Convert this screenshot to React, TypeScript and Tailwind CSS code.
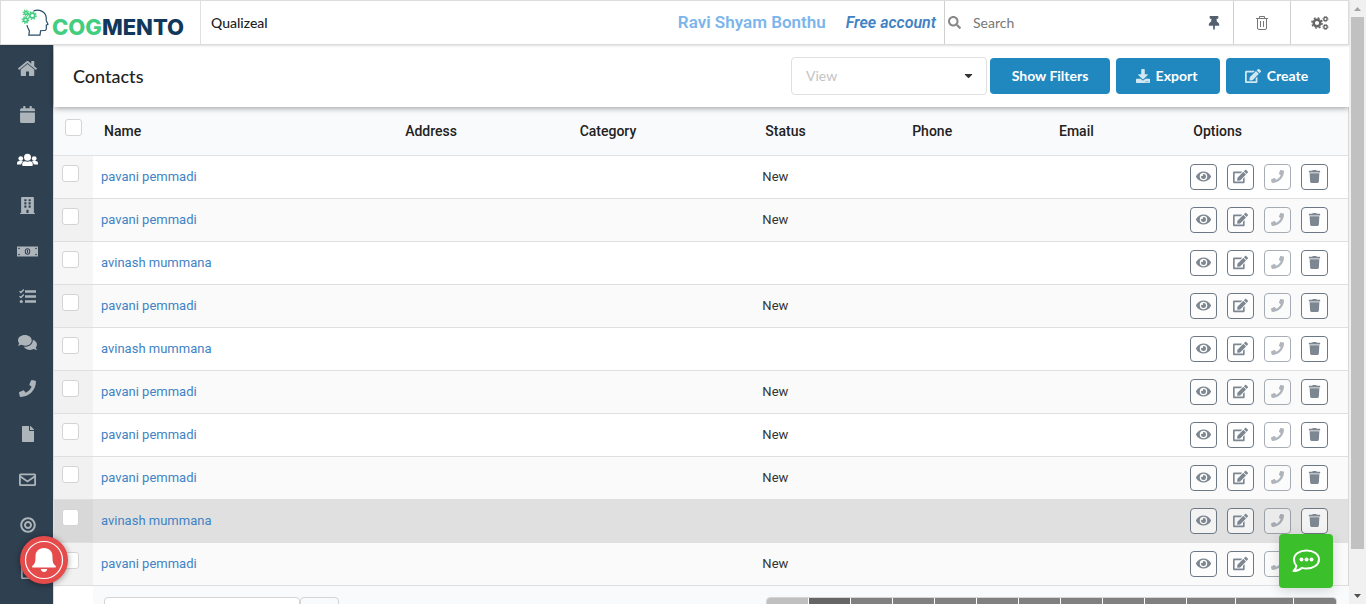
import React from 'react';
import {
  FaCalendar, FaBuilding, FaComments, FaPhone, FaFile,
  FaBullseye, FaRegFileAlt, FaThumbtack, FaEye, FaTrash, FaDownload, FaSearch, FaCaretDown,
} from 'react-icons/fa';

type IconProps = { size: number };

function HomeIcon({ size }: IconProps) {
  return (
    <svg viewBox="0 0 1792 1792" width={size} height={size} fill="currentColor" aria-hidden="true">
      <path d="M1472 992v480q0 26-19 45t-45 19h-384v-384h-256v384h-384q-26 0-45-19t-19-45v-480q0-1 .5-3t.5-3l575-474 575 474q1 2 1 6zm223-69l-62 74q-8 9-21 11h-3q-13 0-21-7l-692-577-692 577q-12 8-24 7-13-2-21-11l-62-74q-8-10-7-23.5t11-21.5l719-599q32-26 76-26t76 26l244 204v-195q0-14 9-23t23-9h192q14 0 23 9t9 23v408l219 182q10 8 11 21.5t-7 23.5z" />
    </svg>
  );
}

function UsersIcon({ size }: IconProps) {
  return (
    <svg viewBox="0 0 21 21" width={size} height={size} fill="currentColor" aria-hidden="true">
      <circle cx="3.800" cy="9.600" r="2.400" />
      <circle cx="17.200" cy="9.600" r="2.400" />
      <circle cx="10.500" cy="8.200" r="3.500" />
      <path d="M0 15.600v-1.300q0-2.400 2.200-2.400h2.900q.6 0 1 .3Q4.400 13.400 4.200 15.600zM21 15.600v-1.300q0-2.400-2.200-2.400h-2.900q-.6 0-1 .3 1.700 1.200 1.900 3.400z" />
      <path d="M5.200 16v-.4q0-3.300 3-3.300 2.300.9 4.600 0 3 0 3 3.300v.4q0 1-1 1H6.200q-1 0-1-1z" />
    </svg>
  );
}

function MoneyIcon({ size }: IconProps) {
  return (
    <svg viewBox="0 0 21 21" width={size} height={size} aria-hidden="true">
      <path fill="currentColor" d="M0 5.500h21v10H0z" />
      <g fill="#2f4050">
        <circle cx="2" cy="7.500" r=".8" /><circle cx="19" cy="7.500" r=".8" />
        <circle cx="2" cy="13.500" r=".8" /><circle cx="19" cy="13.500" r=".8" />
        <ellipse cx="10.500" cy="10.500" rx="2.700" ry="3.200" />
      </g>
      <ellipse cx="10.500" cy="10.500" rx="1.700" ry="2.300" fill="currentColor" />
      <path d="M10.500 9v3" stroke="#2f4050" />
    </svg>
  );
}

function TasksIcon({ size }: IconProps) {
  return (
    <svg viewBox="0 0 17 17" width={size} height={size} fill="none" stroke="currentColor" aria-hidden="true">
      <path d="M6 3.500h11M6 8.500h11M6 13.500h11" strokeWidth="2.400" />
      <path d="M.5 3.200 2 4.500 4.800 1.500M.5 8.200 2 9.500 4.800 6.500" strokeWidth="1.500" />
      <circle cx="2.300" cy="13.500" r="1.600" fill="currentColor" stroke="none" />
    </svg>
  );
}

function EnvelopeIcon({ size }: IconProps) {
  return (
    <svg viewBox="0 0 17 17" width={size} height={size} fill="none" stroke="currentColor" strokeWidth="1.800" aria-hidden="true">
      <rect x=".9" y="3.400" width="15.200" height="10.700" rx=".6" />
      <path d="M1 5.200 8.500 10.400 16 5.200" />
    </svg>
  );
}

const NAV: { label: string; icon: React.ComponentType<IconProps>; size: number; active?: boolean }[] = [
  { label: 'Home', icon: HomeIcon, size: 21 },
  { label: 'Calendar', icon: FaCalendar, size: 17 },
  { label: 'Contacts', icon: UsersIcon, size: 21, active: true },
  { label: 'Companies', icon: FaBuilding, size: 17 },
  { label: 'Deals', icon: MoneyIcon, size: 21 },
  { label: 'Tasks', icon: TasksIcon, size: 17 },
  { label: 'Cases', icon: FaComments, size: 19 },
  { label: 'Calls', icon: FaPhone, size: 17 },
  { label: 'Documents', icon: FaFile, size: 16 },
  { label: 'Email', icon: EnvelopeIcon, size: 17 },
  { label: 'Campaigns', icon: FaBullseye, size: 16 },
  { label: 'Forms', icon: FaRegFileAlt, size: 17 },
];

const P = 'pavani pemmadi';
const A = 'avinash mummana';
const ROWS = [
  { name: P, status: 'New' }, { name: P, status: 'New' }, { name: A, status: '' },
  { name: P, status: 'New' }, { name: A, status: '' }, { name: P, status: 'New' },
  { name: P, status: 'New' }, { name: P, status: 'New' }, { name: A, status: '', hovered: true },
  { name: P, status: 'New' },
];

const COLUMNS = [
  { name: 'Name', width: 'w-[24%]' }, { name: 'Address', width: 'w-[13.9%]' },
  { name: 'Category', width: 'w-[14.8%]' }, { name: 'Status', width: 'w-[11.7%]' },
  { name: 'Phone', width: 'w-[11.7%]' }, { name: 'Email', width: 'w-[10.7%]' },
  { name: 'Options', width: 'w-[13.2%]' },
];

const PAGE_WIDTHS = [
  'w-[42px] bg-[#c0c0c0]', 'w-[42px] bg-[#666666]', 'w-[42px] bg-[#808080]', 'w-[42px] bg-[#808080]',
  'w-[42px] bg-[#808080]', 'w-[42px] bg-[#808080]', 'w-[42px] bg-[#808080]', 'w-[42px] bg-[#808080]',
  'w-[42px] bg-[#808080]', 'w-[42px] bg-[#808080]', 'w-[49px] bg-[#808080]', 'w-[58px] bg-[#808080]',
  'w-[42px] bg-[#808080]',
];

function EditIcon({ size }: IconProps) {
  return (
    <svg viewBox="0 0 576 512" width={size} height={size} fill="currentColor" aria-hidden="true">
      <path d="M402.6 83.2l90.2 90.2c3.8 3.8 3.8 10 0 13.8L274.4 405.6l-92.8 10.3c-12.4 1.4-22.9-9.1-21.5-21.5l10.3-92.8L388.8 83.2c3.8-3.8 10-3.8 13.8 0zm162-22.9l-48.8-48.8c-15.2-15.2-39.9-15.2-55.2 0l-35.4 35.4c-3.8 3.8-3.8 10 0 13.8l90.2 90.2c3.8 3.8 10 3.8 13.8 0l35.4-35.4c15.2-15.3 15.2-40 0-55.2zM384 346.2V448H64V128h229.8c3.2 0 6.2-1.3 8.5-3.5l40-40c7.6-7.6 2.2-20.5-8.5-20.5H48C21.5 64 0 85.5 0 112v352c0 26.5 21.5 48 48 48h352c26.5 0 48-21.5 48-48V306.2c0-10.7-12.9-16-20.5-8.5l-40 40c-2.2 2.3-3.5 5.3-3.5 8.5z" />
    </svg>
  );
}

function Gear({ x, y, r }: { x: number; y: number; r: number }) {
  return (
    <g transform={`translate(${x} ${y})`} fill="none" stroke="#43cd80">
      <circle r={r} strokeWidth="1.6" />
      <circle r={r + 1.3} strokeWidth="1.5" strokeDasharray={`${(r + 1.3) * 0.4} ${(r + 1.3) * 0.385}`} />
    </g>
  );
}

function Logo() {
  return (
    <a href="#home" aria-label="Cogmento" className="flex w-[200px] shrink-0 items-center border-r border-[#e0e0e0] pl-5">
      <svg width="30" height="30" viewBox="0 0 30 30" aria-hidden="true">
        <path d="M12.500 3C18 .8 24.500 3.500 25.200 9.200c.2 1.500-.3 2.600.2 3.800l1.600 3.200-1.700 1v3.200c0 1.700-.9 2.200-2.300 2.100l-3.400.2-.6 4.500H7.800l.6-4C7.500 20.500 6.300 19.500 6 17" fill="none" stroke="#294d69" strokeWidth="1.200" />
        <Gear x={5} y={5} r={1.500} />
        <Gear x={11.300} y={7.500} r={2.400} />
        <Gear x={4.500} y={12} r={1.900} />
      </svg>
      <svg width="136" height="32" viewBox="0 0 136 32" role="img" aria-label="COGMENTO">
        <text x="1" y="28" fontSize="22" fontWeight="800" fontFamily="Inter, sans-serif" fill="#43cd80">COG<tspan fill="#11385a">MENTO</tspan></text>
      </svg>
    </a>
  );
}

function SettingsIcon() {
  return (
    <svg width="18" height="14" viewBox="0 0 18 14" fill="none" stroke="#666" aria-hidden="true">
      <circle cx="6" cy="7" r="3.300" strokeWidth="2.500" />
      <circle cx="6" cy="7" r="5.100" strokeWidth="1.500" strokeDasharray="2 2.005" />
      <circle cx="14.500" cy="3" r="1.700" strokeWidth="1.400" />
      <circle cx="14.500" cy="3" r="2.600" strokeWidth="0.800" strokeDasharray="1 1.040" />
      <circle cx="14.500" cy="11" r="1.700" strokeWidth="1.400" />
      <circle cx="14.500" cy="11" r="2.600" strokeWidth="0.800" strokeDasharray="1 1.040" />
    </svg>
  );
}

function TopBar() {
  return (
    <header className="relative z-20 flex h-[45px] shrink-0 border border-[#dcdcdc] bg-white shadow-[0_1px_2px_rgba(34,36,38,0.15)]">
      <Logo />
      <div className="flex items-center pl-[10px] font-['Lato',sans-serif] text-sm font-medium text-[#222]">Qualizeal</div>
      <div className="ml-auto flex items-center gap-5 pr-2 text-[17px] font-semibold">
        <span className="text-[#7cb5ec]">Ravi Shyam Bonthu</span>
        <span className="text-base text-[#4183c4] italic">Free account</span>
      </div>
      <label className="flex w-[289px] items-center gap-3 border-l border-[#d0d0d0] pr-3 pl-[3px]">
        <FaSearch size={13} className="text-[#888]" />
        <input type="text" aria-label="Search" placeholder="Search" className="min-w-0 flex-1 font-['Lato',sans-serif] text-sm outline-none placeholder:text-[#777]" />
        <FaThumbtack size={14} className="text-[#53606e]" />
      </label>
      <button type="button" aria-label="Trash" className="flex w-[57px] items-center justify-center border-l border-[#d0d0d0] text-[#777]">
        <svg width="14" height="16" viewBox="0 0 14 16" fill="none" stroke="currentColor" aria-hidden="true">
          <path d="M1 3.500h12M4.500 3.500v-2h5v2M2.500 3.500v9.500q0 1.500 1.500 1.500h6q1.500 0 1.500-1.500V3.500M5.500 6v6M8.500 6v6" />
        </svg>
      </button>
      <button type="button" aria-label="Settings" className="flex w-[58px] items-center justify-center border-l border-[#d0d0d0]">
        <SettingsIcon />
      </button>
    </header>
  );
}

function Sidebar() {
  return (
    <nav className="w-[53px] shrink-0 bg-[#2f4050]">
      {NAV.map(({ label, icon: Icon, size, active }) => (
        <a key={label} href={`#${label.toLowerCase()}`} aria-label={label} className={`flex h-[46px] items-center justify-center pl-[2px] nth-[3n]:h-[45px] ${active ? 'text-white' : 'text-[#adb4ba]'}`}>
          <Icon size={size} />
        </a>
      ))}
    </nav>
  );
}

const PRIMARY = "flex h-9 items-center justify-center gap-[6px] rounded bg-[#2088bf] font-['Lato',sans-serif] text-sm font-bold text-white";

function PageHeader() {
  return (
    <div className="relative z-10 flex h-[62px] shrink-0 items-center bg-white pr-[19px] pl-[19px] shadow-[0_1px_6px_rgba(0,0,0,0.4)]">
      <h1 className="font-['Lato',sans-serif] text-lg font-medium text-[#222]">Contacts</h1>
      <div className="ml-auto flex items-center gap-[6px]">
        <div className="relative -mr-[3px]">
          <select aria-label="View" className="block h-[38px] w-[196px] appearance-none rounded border border-[#dedfdf] bg-white px-[14px] font-['Lato',sans-serif] text-sm text-[#c3c3c3]">
            <option>View</option>
          </select>
          <FaCaretDown size={13} className="pointer-events-none absolute top-[12px] right-3 text-[#333]" />
        </div>
        <button type="button" className={`${PRIMARY} w-[120px]`}>Show Filters</button>
        <button type="button" className={`${PRIMARY} w-[104px] pr-[3px]`}><FaDownload size={14} className="text-[#d2e7f2]" />Export</button>
        <button type="button" className={`${PRIMARY} w-[104px] pr-[3px]`}><span className="text-[#d2e7f2]"><EditIcon size={16} /></span>Create</button>
      </div>
    </div>
  );
}

function Check({ label }: { label: string }) {
  return <input type="checkbox" aria-label={label} className="block size-[17px] appearance-none rounded-[3px] border border-[#d4d4d5] bg-white" />;
}

const OPTION = 'flex h-[26px] w-[27px] items-center justify-center rounded-[4px] border border-[#6c7884] bg-white/60 text-[#7d8791]';

function Options() {
  return (
    <div className="flex gap-[10px]">
      <button type="button" aria-label="View contact" className={OPTION}><FaEye size={15} /></button>
      <button type="button" aria-label="Edit contact" className={OPTION}><EditIcon size={15} /></button>
      <button type="button" aria-label="Call contact" disabled className={`${OPTION} opacity-60`}><FaPhone size={13} /></button>
      <button type="button" aria-label="Delete contact" className={OPTION}><FaTrash size={13} /></button>
    </div>
  );
}

function ContactsTable() {
  return (
    <table className="w-full table-fixed border-collapse text-[13px] text-[#333]">
      <thead>
        <tr className="h-[48px] border-b border-[#e1e2e3] bg-[#f9fafb] text-left text-sm text-[#222]">
          <th className="w-[39px] pb-[7px] pl-[11px]"><Check label="Select all contacts" /></th>
          {COLUMNS.map((c) => <th key={c.name} className={`${c.width} pl-[11px] font-medium`}>{c.name}</th>)}
        </tr>
      </thead>
      <tbody>
        {ROWS.map((row, i) => (
          <tr key={i} className={`h-[43px] border-b border-[#dfdfe0] ${row.hovered ? 'bg-[#e0e0e0]' : 'odd:bg-white even:bg-[#fafafa]'}`}>
            <td className="bg-black/[0.035] pb-[7px] pl-2"><Check label={`Select ${row.name}`} /></td>
            <td className="pl-2"><a href="#contact" className="text-[#4183c4]">{row.name}</a></td>
            <td /><td />
            <td className="pl-2">{row.status}</td>
            <td /><td />
            <td className="pl-2"><Options /></td>
          </tr>
        ))}
      </tbody>
    </table>
  );
}

function TableFooter() {
  return (
    <div className="flex flex-1 pl-[39px]">
      <div className="flex flex-1 justify-between bg-[#f9fafb] pt-[11px] pr-3 pl-[11px]">
        <div className="flex">
          <select aria-label="Action" className="h-[38px] w-[196px] appearance-none rounded border border-[#d4d4d5] bg-white"><option aria-label="None" /></select>
          <button type="button" aria-label="Apply" className="h-[38px] w-[39px] rounded border border-[#d4d4d5]" />
        </div>
        <div className="flex h-[38px] overflow-hidden rounded border border-[#d4d4d5]">
          {PAGE_WIDTHS.map((w, i) => <button key={i} type="button" aria-label={`Page ${i}`} className={`${w} border-r border-white last:border-r-0`} />)}
        </div>
      </div>
    </div>
  );
}

export default function App() {
  return (
    <div className="flex h-screen overflow-hidden bg-white font-['Roboto',sans-serif]">
      <div className="flex min-w-0 flex-1 flex-col">
        <TopBar />
        <div className="flex min-h-0 flex-1 overflow-hidden">
          <Sidebar />
          <main className="flex min-w-0 flex-1 flex-col border-l border-[#dcdddd]">
            <PageHeader />
            <div className="shrink-0 border-r border-[#d8d8d8]"><ContactsTable /></div>
            <TableFooter />
          </main>
        </div>
      </div>
      <div className="flex w-[17px] flex-col items-center justify-between bg-[#f1f1f1] pt-[7px] pb-[6px]" aria-hidden="true">
        <svg width="7" height="4" viewBox="0 0 7 4"><path d="M0 4 3.500 0 7 4z" fill="#a3a3a3" /></svg>
        <div className="mt-[6px] mb-auto h-[90%] w-[13px] bg-[#c1c1c1]" />
        <svg width="7" height="4" viewBox="0 0 7 4"><path d="M0 0h7L3.500 4z" fill="#505050" /></svg>
      </div>
      <button type="button" aria-label="Notifications" className="fixed bottom-5 left-5 z-30 flex size-12 items-center justify-center rounded-full bg-[#e64b4b] shadow-[0_1px_6px_rgba(0,0,0,0.4)]">
        <svg width="48" height="48" viewBox="0 0 48 48" aria-hidden="true">
          <circle cx="24" cy="24" r="18.500" fill="none" stroke="#fff" strokeWidth="1.200" />
          <path d="M24 12c-5.500 0-8.500 3.600-8.500 8.500 0 5.700-.5 7-3 9.300-.8.800-.4 1.800.8 1.800h21.400c1.200 0 1.600-1 .8-1.800-2.500-2.300-3-3.600-3-9.300 0-4.900-3-8.500-8.500-8.500zM20.800 33h6.400c-.3 2-1.500 3-3.200 3s-2.900-1-3.200-3z" fill="#fff" />
        </svg>
      </button>
      <button type="button" aria-label="Chat" className="fixed right-[33px] bottom-4 z-30 flex size-[54px] items-center justify-center rounded bg-[#3bbf2b] shadow-[0_3px_12px_rgba(0,0,0,0.15)]">
        <svg width="30" height="26" viewBox="0 0 30 26" fill="none" stroke="#fff" strokeWidth="2" strokeLinejoin="round" aria-hidden="true">
          <path d="M15.500 2.500C22.500 2.500 28 6.300 28 11.500s-5.500 9-12.500 9c-1.700 0-3.200-.2-4.700-.6-2.300 2-5 3.100-8.300 3.100 1.800-1.700 2.700-3.300 2.900-5.200C3.800 16 3 14 3 11.500c0-5.200 5.500-9 12.500-9z" />
          <g fill="#fff" stroke="none"><circle cx="10.500" cy="11.500" r="2" /><circle cx="15.500" cy="11.500" r="2" /><circle cx="20.500" cy="11.500" r="2" /></g>
        </svg>
      </button>
    </div>
  );
}
